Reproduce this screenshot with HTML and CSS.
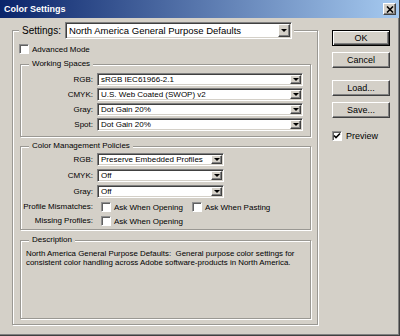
FILE: index.html
```html
<!DOCTYPE html>
<html>
<head>
<meta charset="utf-8">
<link rel="stylesheet" href="styles.css">
</head>
<body>
<div class="window">
  <div class="titlebar">
    <span class="title">Color Settings</span>
    <span class="close"><svg width="8" height="7" viewBox="0 0 8 7"><path d="M1 0.5 L7 6.5 M7 0.5 L1 6.5" stroke="#000" stroke-width="1.6" fill="none"/></svg></span>
  </div>
  <div class="content">
    <div class="main-group">
      <div class="settings-head">
        <span class="settings-label">Settings:</span>
        <div class="select big"><span class="val">North America General Purpose Defaults</span><span class="arrow"><i class="tri"></i></span></div>
      </div>
      <div class="check adv"><span class="box"></span><span>Advanced Mode</span></div>

      <div class="group ws">
        <div class="legend">Working Spaces</div>
        <div class="rows">
          <span class="lbl">RGB:</span><div class="select"><span class="val">sRGB IEC61966-2.1</span><span class="arrow"><i class="tri"></i></span></div>
          <span class="lbl">CMYK:</span><div class="select"><span class="val">U.S. Web Coated (SWOP) v2</span><span class="arrow"><i class="tri"></i></span></div>
          <span class="lbl">Gray:</span><div class="select"><span class="val">Dot Gain 20%</span><span class="arrow"><i class="tri"></i></span></div>
          <span class="lbl">Spot:</span><div class="select"><span class="val">Dot Gain 20%</span><span class="arrow"><i class="tri"></i></span></div>
        </div>
      </div>

      <div class="group cmp">
        <div class="legend">Color Management Policies</div>
        <div class="rows cmp-rows">
          <span class="lbl">RGB:</span><div class="select short"><span class="val">Preserve Embedded Profiles</span><span class="arrow"><i class="tri"></i></span></div>
          <span class="lbl">CMYK:</span><div class="select short"><span class="val">Off</span><span class="arrow"><i class="tri"></i></span></div>
          <span class="lbl">Gray:</span><div class="select short"><span class="val">Off</span><span class="arrow"><i class="tri"></i></span></div>
        </div>
        <div class="checks">
          <span class="lbl">Profile Mismatches:</span>
          <div class="check-line">
            <div class="check"><span class="box"></span><span>Ask When Opening</span></div>
            <div class="check second"><span class="box"></span><span>Ask When Pasting</span></div>
          </div>
          <span class="lbl">Missing Profiles:</span>
          <div class="check-line">
            <div class="check"><span class="box"></span><span>Ask When Opening</span></div>
          </div>
        </div>
      </div>

      <div class="group desc">
        <div class="legend">Description</div>
        <p class="desc-text">North America General Purpose Defaults:&nbsp; General purpose color settings for<br>consistent color handling across Adobe software-products in North America.</p>
      </div>
    </div>

    <div class="side">
      <div class="btn default">OK</div>
      <div class="btn cancel">Cancel</div>
      <div class="btn load">Load...</div>
      <div class="btn save">Save...</div>
      <div class="check preview"><span class="box checked"><svg width="8" height="8" viewBox="0 0 8 8"><path d="M1 3.5 L3 5.5 L7 1.5" stroke="#000" stroke-width="1.6" fill="none"/></svg></span><span>Preview</span></div>
    </div>
  </div>
</div>
</body>
</html>
```
FILE: styles.css
```css
* { box-sizing: border-box; }
html, body { margin: 0; padding: 0; }
body {
  width: 400px;
  height: 336px;
  overflow: hidden;
  background: #d4d0c8;
  font-family: "Liberation Sans", Arial, sans-serif;
  color: #000;
}
.window {
  width: 400px;
  height: 336px;
  background: #d4d0c8;
  border-right: 1px solid #404040;
  border-bottom: 1px solid #404040;
  box-shadow: inset -1px -1px 0 #808080;
  display: flex;
  flex-direction: column;
}
.titlebar {
  height: 18px;
  flex: none;
  background: linear-gradient(to right, #0a246a, #a6caf0);
  display: flex;
  align-items: center;
  justify-content: space-between;
  padding: 0 3px 0 4px;
}
.title {
  color: #fff;
  font-weight: bold;
  font-size: 9px;
}
.close {
  width: 13px;
  height: 12px;
  background: #d4d0c8;
  border: 1px solid;
  border-color: #fff #404040 #404040 #fff;
  box-shadow: inset -1px -1px 0 #808080;
  display: flex;
  align-items: center;
  justify-content: center;
}
.content {
  display: flex;
  flex: 1;
}
.main-group {
  margin: 12px 0 0 12px;
  width: 306px;
  height: 295px;
  border: 1px solid #9a9893;
  box-shadow: inset 1px 1px 0 #fff, 1px 1px 0 #fff;
}
.settings-head {
  display: flex;
  align-items: center;
  width: fit-content;
  height: 17px;
  margin: -9px 0 0 6px;
  padding: 0 2px 0 3px;
  background: #d4d0c8;
}
.settings-label {
  font-size: 10px;
  margin-right: 4px;
}
.select {
  height: 13px;
  background: #fff;
  border: 1px solid;
  border-color: #808080 #fff #fff #808080;
  box-shadow: inset 1px 1px 0 #404040, inset -1px -1px 0 #d4d0c8;
  padding: 1px;
  display: flex;
  font-size: 8px;
}
.select.big {
  width: 227px;
  height: 17px;
  font-size: 9.5px;
}
.val {
  flex: 1;
  display: flex;
  align-items: center;
  padding-left: 2px;
  white-space: nowrap;
  overflow: hidden;
}
.arrow {
  width: 11px;
  background: #d4d0c8;
  border: 1px solid;
  border-color: #fff #404040 #404040 #fff;
  box-shadow: inset -1px -1px 0 #808080;
  display: flex;
  align-items: center;
  justify-content: center;
}
.big .arrow { width: 12px; }
.tri {
  width: 0;
  height: 0;
  border-left: 3px solid transparent;
  border-right: 3px solid transparent;
  border-top: 3px solid #000;
}
.check {
  display: flex;
  align-items: center;
  gap: 3px;
  font-size: 8px;
  height: 10px;
  white-space: nowrap;
}
.box {
  width: 10px;
  height: 10px;
  flex: none;
  background: #fff;
  border: 1px solid;
  border-color: #909090 #fff #fff #909090;
  box-shadow: inset 1px 1px 0 #606060;
  display: flex;
  align-items: center;
  justify-content: center;
}
.adv {
  margin: 5px 0 0 6px;
}
.group {
  margin-left: 7px;
  width: 291px;
  border: 1px solid #9a9893;
  box-shadow: inset 1px 1px 0 #fff, 1px 1px 0 #fff;
}
.legend {
  width: fit-content;
  height: 10px;
  line-height: 10px;
  margin: -6px 0 0 8px;
  padding: 0 3px;
  background: #d4d0c8;
  font-size: 8px;
}
.ws { margin-top: 10px; }
.rows {
  display: grid;
  grid-template-columns: 72px 206px;
  column-gap: 4px;
  row-gap: 2px;
  margin-top: 4px;
  padding-bottom: 5px;
}
.lbl {
  text-align: right;
  font-size: 8px;
  line-height: 13px;
  white-space: nowrap;
}
.cmp { margin-top: 9px; }
.cmp-rows {
  grid-template-columns: 72px 127px;
  row-gap: 3px;
  margin-top: 2px;
  padding-bottom: 0;
}
.checks {
  display: grid;
  grid-template-columns: 72px auto;
  column-gap: 4px;
  row-gap: 4px;
  margin-top: 4px;
  padding-bottom: 3px;
}
.checks .lbl { line-height: 10px; }
.check-line {
  display: flex;
  margin-left: 4px;
}
.check.second { margin-left: 9px; }
.desc {
  margin-top: 10px;
  height: 79px;
}
.desc-text {
  margin: 4px 0 0 5px;
  font-size: 7.9px;
  line-height: 9px;
  white-space: nowrap;
}
.side {
  margin: 12px 0 0 14px;
  width: 58px;
  display: flex;
  flex-direction: column;
}
.btn {
  height: 16px;
  font-size: 9px;
  background: #d4d0c8;
  border: 1px solid;
  border-color: #fff #404040 #404040 #fff;
  box-shadow: inset -1px -1px 0 #808080;
  display: flex;
  align-items: center;
  justify-content: center;
}
.btn.default {
  border-color: #000;
  box-shadow: inset 1px 1px 0 #fff, inset -1px -1px 0 #404040, inset -2px -2px 0 #808080;
}
.btn.cancel { margin-top: 6px; }
.btn.load { margin-top: 12px; }
.btn.save { margin-top: 6px; }
.preview {
  margin-top: 13px;
  font-size: 9px;
  gap: 4px;
}
```
